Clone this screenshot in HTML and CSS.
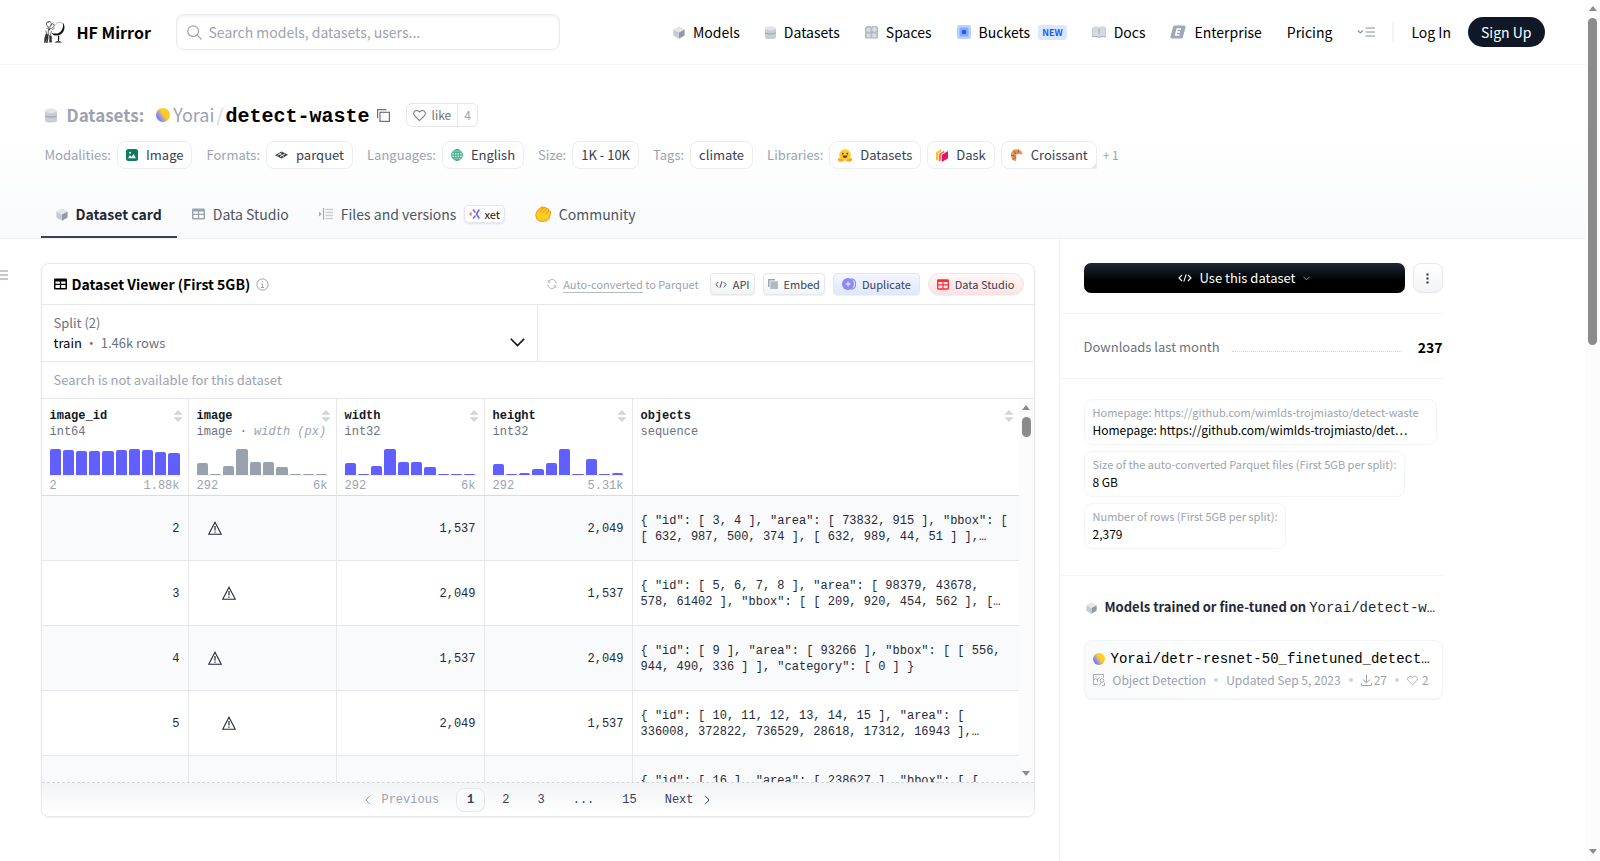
FILE: index.html
```html
<!DOCTYPE html>
<html lang="en">
<head>
  <meta charset="UTF-8">
  <meta name="viewport" content="width=device-width, initial-scale=1.0">
  <title>Yorai/detect-waste · Datasets at HF Mirror</title>
  <link rel="stylesheet" href="styles.css">
</head>
<body>

  <!-- shared icons -->
  <svg class="sprite" aria-hidden="true">
    <symbol id="i-cube" viewBox="0 0 12 13">
      <path d="M6 .3 11.6 3.3 6 6.5.4 3.3z" fill="#e2e5ea"/>
      <path d="M.4 3.6 5.8 6.6v6.1L.4 9.6z" fill="#c5cad3"/>
      <path d="M11.6 3.6 6 6.6v6.1l5.600-3.100z" fill="#9199a8"/>
    </symbol>
    <symbol id="i-db" viewBox="0 0 12 14">
      <path d="M0 2.500v9.300C0 13.400 1.500 14 6 14s6-.6 6-2.200V2.500z" fill="#c8ccd4"/>
      <ellipse cx="6" cy="2.400" rx="6" ry="2.300" fill="#e1e4e9"/>
      <path d="M.2 7.200c1.300 1.100 3.200 1.300 5.800 1.300s4.500-.2 5.800-1.300" fill="none" stroke="#8f97a6" stroke-width=".9"/>
    </symbol>
    <symbol id="i-grid" viewBox="0 0 14 12">
      <path fill-rule="evenodd" d="M1.500 0h11A1.500 1.500 0 0 1 14 1.500v9a1.500 1.500 0 0 1-1.500 1.500h-11A1.500 1.500 0 0 1 0 10.500v-9A1.500 1.500 0 0 1 1.500 0zM1.600 3.200v2.500h4.700V3.200zm6.100 0v2.500h4.700V3.200zM1.600 7.100v3.200h4.700V7.100zm6.100 0v3.200h4.700V7.100z" fill="currentColor"/>
    </symbol>
    <symbol id="i-heart" viewBox="0 0 14 13">
      <path d="M7 12 1.700 6.700a3.200 3.200 0 0 1 0-4.600 3.200 3.200 0 0 1 4.600 0L7 2.800l.7-.7a3.200 3.200 0 0 1 4.600 0 3.200 3.200 0 0 1 0 4.600z" fill="none" stroke="currentColor" stroke-width="1.100"/>
    </symbol>
    <symbol id="i-code" viewBox="0 0 14 8">
      <path d="M4 1 1 4l3 3M10 1l3 3-3 3M8.200.3 5.800 7.700" fill="none" stroke="currentColor" stroke-width="1.100"/>
    </symbol>
    <symbol id="i-sort" viewBox="0 0 10 12">
      <path d="M5 0 9.600 4.800H.4zM5 12 .4 7.200h9.200z" fill="#d1d5db"/>
    </symbol>
    <symbol id="i-warn" viewBox="0 0 14 14">
      <path d="M7 1.200 13.300 13.300H.7z" fill="none" stroke="#1f2937" stroke-width="1.100"/>
      <path d="M7 5v4.600M7 10.500v1.300" stroke="#1f2937" stroke-width="1.200"/>
    </symbol>
    <symbol id="i-up" viewBox="0 0 8 5"><path d="M4 0 8 5H0z" fill="#8b8b8b"/></symbol>
    <symbol id="i-down" viewBox="0 0 8 5"><path d="M4 5 8 0H0z" fill="#8b8b8b"/></symbol>
  </svg>

  <div class="page">
    <header class="site-header">
      <div class="container site-bar">
        <a class="brand" href="#">
          <svg width="22" height="24" viewBox="0 0 22 24">
            <path d="M10.500 5.500C12 2.500 15.500 1.500 18 3" fill="none" stroke="#999" stroke-width=".7"/>
            <path d="M18.500 2.500c2.300 2 2.600 6 .9 9-1.700 2.900-5 4.500-8.100 4-1.800-.3-3.200-1.300-3.600-2.800 3 1.600 6.500 1 9-1.300 2.300-2.300 3-6 1.800-8.900z" fill="#111"/>
            <path d="M14.700 15.500l-.2 5.500" stroke="#111" stroke-width="1.200"/>
            <path d="M10.500 22.500c1.500-1.700 6-1.700 7.500 0z" fill="#111"/>
            <path d="M2.500 3C3.500 1 6 .8 7 2.500s.3 4-1.500 4.500S2 5.500 2.500 3zM6 5.500l3-2 1.500 2.500-2.500 2M2.500 8.500c2-1 4.500-.5 6 1l2-1.500M1.800 10.500l.9 3.500-1.700 4-.5 4.500M4.500 9l-.3 5 1.800 4-.8 4.500M7.500 11l-1 3.500 1.500 4" fill="none" stroke="#444" stroke-width=".8"/>
            <path d="M.8 17l1-3.500 2.400 1 .3 3.500-1 5H2l.5-4-1.200 4H.3zM5.500 15l2 1.500.5 6H6l-.3-3.500zM3 2.500l2-1L4.500 3zM4 8.500l2.500.3-1 2z" fill="#333"/>
          </svg>
          <span>HF Mirror</span>
        </a>
        <label class="search">
          <svg width="15" height="15" viewBox="0 0 15 15" fill="none" stroke="#9ca3af" stroke-width="1.200"><circle cx="6.200" cy="6.200" r="5.400"/><path d="M10.200 10.200 14.500 14.500"/></svg>
          <input type="text" placeholder="Search models, datasets, users..." aria-label="Search models, datasets, users">
        </label>
        <nav class="site-nav">
          <a href="#"><svg width="12" height="13"><use href="#i-cube"/></svg>Models</a>
          <a href="#"><svg width="11" height="13"><use href="#i-db"/></svg>Datasets</a>
          <a href="#"><svg width="13" height="13" viewBox="0 0 13 13"><path d="M0 1h1l1-1h3.500l1 1 1-1H12l1 1.500v11H0z" fill="#b4bac6"/><g fill="#d9dce2"><rect x="1.500" y="2" width="4" height="3.800" rx=".5"/><rect x="1.500" y="7.400" width="4" height="3.800" rx=".5"/><rect x="7.300" y="7.400" width="4" height="3.800" rx=".5"/><circle cx="9.500" cy="3.400" r="2.300"/></g></svg>Spaces</a>
          <a href="#"><svg width="14" height="14" viewBox="0 0 14 14"><rect width="14" height="14" rx="2.500" fill="#bcd0ff"/><rect x="2.500" y="2.500" width="9" height="9" rx="1.500" fill="#85a9ff"/><rect x="5" y="5" width="4" height="4" rx=".5" fill="#1d5cff"/></svg>Buckets <span class="new">NEW</span></a>
          <a href="#"><svg width="14" height="12" viewBox="0 0 14 12"><path d="M.5 1C3 0 5.500 0 7 1c1.500-1 4-1 6.500 0v10c-2.500-.6-5-.5-6.500.5-1.500-1-4-1.100-6.500-.5z" fill="#d5d9df"/><path d="M0 11.300V2M14 11.300V2M7 2.500v5.500M.3 11c2.500-.7 5.200-.6 6.700.4 1.500-1 4.200-1.100 6.700-.4" fill="none" stroke="#a3aab8"/></svg>Docs</a>
          <a href="#"><svg width="16" height="14" viewBox="0 0 16 14"><path d="M4.800.5H14a1.500 1.500 0 0 1 1.500 2l-2.600 9.500a2 2 0 0 1-2 1.500H2a1.500 1.500 0 0 1-1.500-2L3 2A2 2 0 0 1 4.800.5z" fill="#a0a8b7"/><path d="M11 3.900H7.200L5.700 10h3.900M6.500 7h3.500" fill="none" stroke="#fff" stroke-width="1.500"/></svg>Enterprise</a>
          <a href="#">Pricing</a>
          <button class="plain" aria-label="More"><svg width="18" height="10" viewBox="0 0 18 10" fill="none" stroke="#8890a0"><path d="M.8 3.500 3.300 6l2.500-2.500" stroke-width="1.200"/><path d="M8.500 1H18M8.500 5H18M8.500 9H18"/></svg></button>
          <span class="nav-rule"></span>
          <a href="#">Log In</a>
          <a class="sign-up" href="#">Sign Up</a>
        </nav>
      </div>
    </header>

    <div class="hero">
      <div class="container">
        <h1 class="title">
          <a class="kind" href="#"><svg width="12" height="15"><use href="#i-db"/></svg>Datasets:</a>
          <span class="avatar"></span>
          <span class="path"><a class="owner" href="#">Yorai</a><span class="slash">/</span><a class="name" href="#">detect-waste</a></span>
          <button class="plain copy" aria-label="Copy name"><svg width="13" height="13" viewBox="0 0 13 13" fill="none" stroke="#6b7280" stroke-width="1.200"><path d="M.6 9V.6H9.500"/><rect x="3" y="3.300" width="9.400" height="9.100"/></svg></button>
          <span class="like">
            <button><svg width="13" height="13"><use href="#i-heart"/></svg>like</button>
            <button class="like-count">4</button>
          </span>
        </h1>

        <div class="tags">
          <div class="tag-group"><span>Modalities:</span>
            <a class="tag" href="#"><svg width="12" height="12" viewBox="0 0 12 12"><rect width="12" height="12" rx="2.500" fill="#0b7d5c"/><path d="M2 9.200 4 6l1.500 2L7.500 5 10 9.200z" fill="#fff"/><circle cx="4" cy="3.700" r="1" fill="#fff"/></svg>Image</a></div>
          <div class="tag-group"><span>Formats:</span>
            <a class="tag" href="#"><svg width="13" height="12" viewBox="0 0 13 12"><path d="M0 6.300 6.500 2.500 13 5.700 6.500 9.500z" fill="#374151"/><path d="M2.500 6.300 6.500 4M5 7.700l5-2.900M4 4.800l5 2.700" stroke="#fff" stroke-width=".8"/></svg>parquet</a></div>
          <div class="tag-group"><span>Languages:</span>
            <a class="tag" href="#"><svg width="12" height="12" viewBox="0 0 12 12" fill="none" stroke="#3aab84" stroke-width="1"><circle cx="6" cy="6" r="5.400" fill="#d3f0e5"/><ellipse cx="6" cy="6" rx="2.600" ry="5.400"/><path d="M6 .6v10.800M.6 6h10.800M1.300 3.300h9.400M1.300 8.700h9.400"/></svg>English</a></div>
          <div class="tag-group"><span>Size:</span><a class="tag" href="#">1K - 10K</a></div>
          <div class="tag-group"><span>Tags:</span><a class="tag" href="#">climate</a></div>
          <div class="tag-group"><span>Libraries:</span>
            <a class="tag" href="#"><svg width="14" height="13" viewBox="0 0 14 13"><circle cx="7" cy="6" r="5.800" fill="#ffcc2b"/><path d="M0 10.500c0-1.300 1-1.800 2-1.300L5.500 11v1.500H1.500C.5 12.500 0 11.500 0 10.500zM14 10.500c0-1.300-1-1.800-2-1.300L8.500 11v1.500h4c1 0 1.500-1 1.500-2z" fill="#ffa512"/><path d="M4.500 6.500h5C9.300 8.300 8.300 9 7 9s-2.300-.7-2.500-2.500z" fill="#6b3a10"/><circle cx="4.700" cy="4.600" r=".9" fill="#40372c"/><circle cx="9.300" cy="4.600" r=".9" fill="#40372c"/></svg>Datasets</a>
            <a class="tag" href="#"><svg width="12" height="13" viewBox="0 0 12 13"><path d="M0 3.500 5 .3v2.500L2.200 4.500v6L0 11.700z" fill="#ffc11e"/><path d="M2.800 5 8.200 1.600v2L5.300 5.300v6l-2.500 1.200z" fill="#fc6e6b"/><path d="M6 5.700 12 2v7.300L6 13z" fill="#ef1161"/></svg>Dask</a>
            <a class="tag croissant" href="#"><svg width="13" height="13" viewBox="0 0 13 13"><path d="M1 5C1.500 2 4 0 7 .3c2.500.3 5 1.700 5.700 4.400-1.500.8-3.200.8-4.400 0C7 4.800 6 6 6.300 7.500c.2 1 .3 1.800-.8 4.800C2.500 11.500.5 8.500 1 5z" fill="#e0975f"/><path d="M4 1.500 5.500 5M8.500.8 8 4.500M1 6.500l4.500.5M2.500 10.500l3.300-2" stroke="#b4552a" fill="none"/></svg>Croissant</a>
            <span class="more">+ 1</span></div>
        </div>

        <nav class="tabs">
          <a class="active" href="#"><svg width="12" height="13"><use href="#i-cube"/></svg>Dataset card</a>
          <a href="#"><svg class="tab-grid" width="13" height="12"><use href="#i-grid"/></svg>Data Studio</a>
          <a href="#"><svg width="14" height="12" viewBox="0 0 14 12"><path d="M0 3.500 2.700 6 0 8.500z" fill="#a3aab6"/><path d="M4.500 0v12" stroke="#a3aab6" stroke-width="1.200"/><path d="M6.500 1.500H14M6.500 4.500H14M6.500 7.500H14M6.500 10.500H14" stroke="#c9cdd5" stroke-width="1.300"/></svg>Files and versions
            <span class="xet"><svg width="11" height="10" viewBox="0 0 11 10"><path d="M4 .5 6.500 3.500M4 9.500l2.500-3M10.300.5 7.500 5l2.800 4.500" fill="none" stroke="#6d69f5" stroke-width="1.600"/><path d="M2.500 2.500 0 5l2.500 2.500z" fill="#ff6b3d"/></svg>xet</span></a>
          <a href="#"><svg width="16" height="16" viewBox="0 0 16 16"><path d="M1 10C.5 7.500 3 4 5.500 2 6.800.8 8.300 1 8.300 2.300 9.600.8 11.300 1.300 11.200 2.900c1.500-.8 2.800.2 2.400 1.900 1.500-.1 2.200 1 1.700 2.500-.6 2-.5 4-2 5.800-2.500 2.600-7.500 2.900-10 1C1.800 12.900 1.200 11.500 1 10z" fill="#ffd021" stroke="#ff9d1e" stroke-width="1.200"/><path d="M8.300 2.300C6.500 3.700 5.500 5 5 6.800M11.200 2.900 8 6.500M13.600 4.800 10.500 8" fill="none" stroke="#ff9d1e" stroke-width="1.100"/></svg>Community</a>
        </nav>
      </div>
    </div>

    <button class="plain toc-toggle" aria-label="Table of contents"><svg width="8" height="10" viewBox="0 0 8 10" stroke="#8b93a1" stroke-width="1.200"><path d="M0 1h8M0 5h8M0 9h8"/></svg></button>

    <main class="container columns">
      <section class="content">
        <div class="viewer">
          <div class="viewer-head">
            <svg width="13" height="12"><use href="#i-grid"/></svg>
            <h2>Dataset Viewer (First 5GB)</h2>
            <svg width="13" height="13" viewBox="0 0 13 13" fill="none" stroke="#9ca3af"><circle cx="6.500" cy="6.500" r="5.600"/><path d="M6.500 3v1.300M5.300 6h1.200v3.500M5 9.500h3"/></svg>
            <div class="converted">
              <svg width="10" height="10" viewBox="0 0 10 10" fill="none" stroke="#a8aeb9" stroke-width=".9"><path d="M9.300 4.500A4 4 0 0 0 2 2.200M1.200.8v2.400h2.400M.7 5.500A4 4 0 0 0 8 7.800M8.800 9.200V6.800H6.400"/></svg>
              <span><a href="#">Auto-converted</a> to Parquet</span>
            </div>
            <button class="btn"><svg width="12" height="7"><use href="#i-code"/></svg>API</button>
            <button class="btn"><svg width="10" height="10" viewBox="0 0 10 10"><path d="M0 0h7v1.500H1.500V8H0z" fill="#9ca3af"/><rect x="2.300" y="2.300" width="7.700" height="7.700" fill="#b3b8c1"/></svg>Embed</button>
            <button class="btn duplicate"><svg width="14" height="12" viewBox="0 0 14 12"><path d="M9.500.6A5.600 5.600 0 0 1 9.500 11.400" fill="none" stroke="#8b87ff" stroke-width="1.100"/><circle cx="6" cy="6" r="6" fill="#8b87ff"/><path d="M6 3.500v5M3.500 6h5" stroke="#fff"/></svg>Duplicate</button>
            <button class="btn studio"><svg width="12" height="11"><use href="#i-grid"/></svg>Data Studio</button>
          </div>
          <div class="viewer-split">
            <button class="split">
              <span class="split-text"><span>Split (2)</span><span><b>train</b> <i>·</i> 1.46k rows</span></span>
              <svg width="15" height="9" viewBox="0 0 15 9" fill="none" stroke="#111" stroke-width="1.600"><path d="M.8.8 7.500 7.500 14.200.8"/></svg>
            </button>
          </div>
          <input class="viewer-search" type="text" placeholder="Search is not available for this dataset" aria-label="Search this dataset" disabled>

          <div class="table-area">
            <div class="table-clip">
              <table>
                <colgroup><col class="c-id"><col class="c-num"><col class="c-num"><col class="c-num"><col></colgroup>
                <thead>
                  <tr>
                    <th><div class="col-name">image_id<svg width="10" height="12"><use href="#i-sort"/></svg></div><div class="col-type">int64</div>
                      <div class="bars"><i style="height:26px"></i><i style="height:25px"></i><i style="height:24px"></i><i style="height:24px"></i><i style="height:24px"></i><i style="height:25px"></i><i style="height:26px"></i><i style="height:25px"></i><i style="height:23px"></i><i style="height:22px"></i></div>
                      <div class="range"><span>2</span><span>1.88k</span></div></th>
                    <th><div class="col-name">image<svg width="10" height="12"><use href="#i-sort"/></svg></div><div class="col-type">image · <em>width (px)</em></div>
                      <div class="bars gray"><i style="height:12px"></i><i style="height:1px"></i><i style="height:9px"></i><i style="height:26px"></i><i style="height:13px"></i><i style="height:13px"></i><i style="height:8px"></i><i style="height:1px"></i><i style="height:1px"></i><i style="height:1px"></i></div>
                      <div class="range"><span>292</span><span>6k</span></div></th>
                    <th><div class="col-name">width<svg width="10" height="12"><use href="#i-sort"/></svg></div><div class="col-type">int32</div>
                      <div class="bars"><i style="height:12px"></i><i style="height:1px"></i><i style="height:9px"></i><i style="height:26px"></i><i style="height:13px"></i><i style="height:13px"></i><i style="height:8px"></i><i style="height:1px"></i><i style="height:1px"></i><i style="height:1px"></i></div>
                      <div class="range"><span>292</span><span>6k</span></div></th>
                    <th><div class="col-name">height<svg width="10" height="12"><use href="#i-sort"/></svg></div><div class="col-type">int32</div>
                      <div class="bars"><i style="height:11px"></i><i style="height:1px"></i><i style="height:2px"></i><i style="height:6px"></i><i style="height:12px"></i><i style="height:26px"></i><i style="height:1px"></i><i style="height:16px"></i><i style="height:1px"></i><i style="height:2px"></i></div>
                      <div class="range"><span>292</span><span>5.31k</span></div></th>
                    <th><div class="col-name">objects<svg width="10" height="12"><use href="#i-sort"/></svg></div><div class="col-type">sequence</div></th>
                  </tr>
                </thead>
                <tbody>
                  <tr><td>2</td><td class="thumb"><span class="tall"><svg width="14" height="14"><use href="#i-warn"/></svg></span></td><td>1,537</td><td>2,049</td><td class="json"><div>{ "id": [ 3, 4 ], "area": [ 73832, 915 ], "bbox": [ [ 632, 987, 500, 374 ], [ 632, 989, 44, 51 ] ],…</div></td></tr>
                  <tr><td>3</td><td class="thumb"><span class="wide"><svg width="14" height="14"><use href="#i-warn"/></svg></span></td><td>2,049</td><td>1,537</td><td class="json"><div>{ "id": [ 5, 6, 7, 8 ], "area": [ 98379, 43678, 578, 61402 ], "bbox": [ [ 209, 920, 454, 562 ], […</div></td></tr>
                  <tr><td>4</td><td class="thumb"><span class="tall"><svg width="14" height="14"><use href="#i-warn"/></svg></span></td><td>1,537</td><td>2,049</td><td class="json"><div>{ "id": [ 9 ], "area": [ 93266 ], "bbox": [ [ 556, 944, 490, 336 ] ], "category": [ 0 ] }</div></td></tr>
                  <tr><td>5</td><td class="thumb"><span class="wide"><svg width="14" height="14"><use href="#i-warn"/></svg></span></td><td>2,049</td><td>1,537</td><td class="json"><div>{ "id": [ 10, 11, 12, 13, 14, 15 ], "area": [ 336008, 372822, 736529, 28618, 17312, 16943 ],…</div></td></tr>
                  <tr><td></td><td class="thumb"></td><td></td><td></td><td class="json"><div>{ "id": [ 16 ], "area": [ 238627 ], "bbox": [ [</div></td></tr>
                </tbody>
              </table>
            </div>
            <div class="scrollbar inner"><svg width="10" height="5"><use href="#i-up"/></svg><span class="thumb-bar"></span><svg width="10" height="5"><use href="#i-down"/></svg></div>
          </div>

          <nav class="pager">
            <a class="off" href="#"><svg width="6" height="10" viewBox="0 0 6 10" fill="none" stroke="currentColor"><path d="M5 .8 1 5l4 4.200"/></svg>Previous</a>
            <a class="current" href="#">1</a>
            <a href="#">2</a>
            <a href="#">3</a>
            <a href="#">...</a>
            <a href="#">15</a>
            <a href="#">Next<svg width="6" height="10" viewBox="0 0 6 10" fill="none" stroke="currentColor"><path d="M1 .8 5 5 1 9.200"/></svg></a>
          </nav>
        </div>
      </section>

      <aside class="sidebar">
        <div class="side-block actions">
          <button class="use"><svg width="14" height="8"><use href="#i-code"/></svg>Use this dataset<svg width="7" height="5" viewBox="0 0 7 5" fill="none" stroke="#8c95a5"><path d="M.5.7 3.500 3.900 6.500.7"/></svg></button>
          <button class="dots" aria-label="More actions"><svg width="3" height="11" viewBox="0 0 3 11" fill="#1f2937"><rect width="2" height="2" x=".5" y=".5"/><rect width="2" height="2" x=".5" y="4.500"/><rect width="2" height="2" x=".5" y="8.500"/></svg></button>
        </div>
        <div class="side-block downloads"><span>Downloads last month</span><span class="leader"></span><strong>237</strong></div>
        <div class="side-block facts">
          <a class="fact long" href="#"><small>Homepage: https://github.com/wimlds-trojmiasto/detect-waste</small><span>Homepage: https://github.com/wimlds-trojmiasto/det…</span></a>
          <a class="fact" href="#"><small>Size of the auto-converted Parquet files (First 5GB per split):</small><span>8 GB</span></a>
          <a class="fact" href="#"><small>Number of rows (First 5GB per split):</small><span>2,379</span></a>
        </div>
        <div class="side-block models">
          <h3><svg width="11" height="12"><use href="#i-cube"/></svg><span>Models trained or fine-tuned on <code>Yorai/detect-w…</code></span></h3>
          <a class="model" href="#">
            <div class="model-name"><span class="avatar"></span><code>Yorai/detr-resnet-50_finetuned_detect…</code></div>
            <div class="model-meta">
              <svg width="12" height="12" viewBox="0 0 12 12" fill="none" stroke="currentColor" stroke-width=".9"><path d="M4.500 10.500H.5V.5h10v3M.5 6.500 2.500 4.500l2 1.500M4.500 8.500V5L7 3.500M3 2v1"/><circle cx="9" cy="6.500" r="1.800"/><path d="M8 8.500 6.500 11.500M11.500 8.500v3H9"/></svg>
              <span>Object Detection</span><i></i><span>Updated Sep 5, 2023</span><i></i>
              <span class="count"><svg width="11" height="11" viewBox="0 0 11 11" fill="none" stroke="currentColor"><path d="M5.500 0v7.500M2 4.500l3.500 3.300L9 4.500M.5 8v2.500h10V8"/></svg>27</span><i></i>
              <span class="count likes"><svg width="11" height="11"><use href="#i-heart"/></svg>2</span>
            </div>
          </a>
        </div>
      </aside>
    </main>
  </div>

  <div class="scrollbar outer"><svg width="10" height="5"><use href="#i-up"/></svg><span class="thumb-bar"></span><svg width="10" height="5"><use href="#i-down"/></svg></div>

</body>
</html>
```

FILE: styles.css
```css
* {
  box-sizing: border-box;
}

body {
  display: flex;
  height: 100vh;
  margin: 0;
  overflow: hidden;
  font-family: "Noto Sans CJK SC", "Open Sans", sans-serif;
  font-size: 14px;
  line-height: 24px;
  color: #000;
  background: #fff;
}

a {
  color: inherit;
  text-decoration: none;
}

button,
input {
  font: inherit;
  color: inherit;
}

button {
  padding: 0;
  cursor: pointer;
}

svg {
  flex: none;
}

code {
  font-family: "Liberation Mono", monospace;
  font-size: 14px;
}

.sprite {
  display: none;
}

.plain {
  display: flex;
  border: 0;
  background: none;
}

.page {
  position: relative;
  flex: 1;
  min-width: 0;
  height: 100%;
  display: flex;
  flex-direction: column;
}

.container {
  width: 100%;
  max-width: 1536px;
  margin: 0 auto;
  padding: 0 16px;
}

/* top bar */
.site-header {
  border-bottom: 1px solid #f3f4f6;
}

.site-bar {
  display: flex;
  align-items: center;
  height: 64px;
}

.brand {
  display: flex;
  align-items: center;
  gap: 11px;
  width: 135px;
  padding-left: 3px;
  font-size: 16px;
  font-weight: bold;
  white-space: nowrap;
}

.search {
  display: flex;
  align-items: center;
  gap: 7px;
  flex: 0 1 384px;
  height: 36px;
  padding: 0 10px;
  border: 1px solid #e5e7eb;
  border-radius: 8px;
  box-shadow: inset 0 2px 3px #f3f4f6;
}

.search input {
  flex: 1;
  min-width: 0;
  padding: 0;
  border: 0;
  outline: 0;
  background: none;
}

input::placeholder {
  color: #9ca3af;
  opacity: 1;
}

.site-nav {
  display: flex;
  align-items: center;
  gap: 25px;
  margin-left: auto;
  white-space: nowrap;
}

.site-nav a {
  display: flex;
  align-items: center;
  gap: 8px;
}

.new {
  padding: 0 4px;
  border-radius: 3px;
  font-size: 9px;
  font-weight: bold;
  line-height: 15px;
  color: #1d5cff;
  background: #dbe6ff;
}

.nav-rule {
  width: 2px;
  height: 20px;
  margin: 0 -8px;
  background: #f3f4f6;
}

.site-nav .sign-up {
  height: 30px;
  margin-left: -8px;
  padding: 0 13px;
  border-radius: 15px;
  color: #fff;
  background: #101827;
}

/* dataset header */
.hero {
  padding-top: 34px;
  border-bottom: 1px solid #f0f1f4;
  background: linear-gradient(#fff 35%, #f9fafc);
}

.title {
  display: flex;
  align-items: center;
  height: 32px;
  margin: 0 0 10px;
  padding-left: 4px;
  font-size: 18px;
  font-weight: normal;
}

.kind {
  display: flex;
  align-items: center;
  gap: 10px;
  margin-right: 12px;
  font-size: 17px;
  font-weight: bold;
  color: #9ca3af;
}

.avatar {
  width: 14px;
  height: 14px;
  margin-right: 3px;
  border-radius: 50%;
  background: linear-gradient(55deg, #7b83ff 25%, #d9b07e 45%, #f9cf22 58%);
}

.path {
  display: flex;
  align-items: baseline;
}

.owner {
  color: #9ca3af;
}

.slash {
  margin: 0 2px;
  color: #d1d5db;
}

.name {
  font-family: "Liberation Mono", monospace;
  font-size: 20px;
  font-weight: bold;
}

.copy {
  margin: 0 16px 0 8px;
}

.like {
  display: flex;
  height: 24px;
  border: 1px solid #e5e7eb;
  border-radius: 6px;
}

.like button {
  display: flex;
  align-items: center;
  gap: 5px;
  padding: 0 6px;
  border: 0;
  font-size: 12px;
  line-height: 22px;
  color: #6b7280;
  background: none;
}

.like .like-count {
  border-left: 1px solid #e5e7eb;
  color: #9ca3af;
}

.tags {
  display: flex;
  gap: 14px;
  padding-left: 4px;
  font-size: 13px;
  white-space: nowrap;
}

.tag-group {
  display: flex;
  align-items: center;
  gap: 6px;
  color: #9ca3af;
}

.tag {
  display: flex;
  align-items: center;
  gap: 8px;
  height: 28px;
  padding: 0 8px;
  border: 1px solid #ededf0;
  border-radius: 8px;
  color: #374151;
  background: #fff;
}

.croissant {
  border-bottom-right-radius: 0;
  background: linear-gradient(135deg, #fff 96%, #e5e7eb 96%);
}

.more {
  font-size: 12px;
}

.tabs {
  display: flex;
  margin-top: 21px;
}

.tabs a {
  display: flex;
  align-items: center;
  gap: 8px;
  height: 48px;
  padding: 2px 15px 0;
  border-bottom: 2px solid transparent;
  color: #4b5563;
  white-space: nowrap;
}

.tabs .active {
  border-bottom-color: #374151;
  font-weight: bold;
  color: #1f2937;
}

.tab-grid {
  color: #9ca3af;
}

.xet {
  display: flex;
  align-items: center;
  gap: 4px;
  padding: 0 4px;
  border: 1px solid #e5e7eb;
  border-radius: 5px;
  font-size: 11px;
  line-height: 16px;
  color: #111;
  background: #fff;
  box-shadow: 0 1px 2px #e4defc;
}

.toc-toggle {
  position: absolute;
  left: 0;
  top: 270px;
}

/* two columns */
.columns {
  flex: 1;
  display: flex;
  min-height: 0;
  padding-right: 118px;
}

.content {
  flex: 1;
  min-width: 0;
  padding: 24px 24px 0 0;
}

.viewer {
  overflow: hidden;
  border: 1px solid #e5e7eb;
  border-radius: 8px;
  box-shadow: 0 1px 2px #eef0f2;
}

.viewer-head {
  display: flex;
  align-items: center;
  gap: 8px;
  height: 41px;
  padding: 0 10px 0 12px;
  border-bottom: 1px solid #e5e7eb;
  white-space: nowrap;
}

.viewer-head h2 {
  margin: 0 -2px 0 -3px;
  font-size: 14px;
  font-weight: bold;
}

.converted {
  display: flex;
  align-items: center;
  gap: 6px;
  margin: 0 3px 0 auto;
  font-size: 11px;
  color: #9ca3af;
}

.converted a {
  border-bottom: 1px solid #b6bbc4;
}

.btn {
  display: flex;
  align-items: center;
  gap: 6px;
  height: 22px;
  padding: 0 4px;
  border: 1px solid #e5e7eb;
  border-radius: 4px;
  font-size: 11px;
  color: #374151;
  background: linear-gradient(#fff, #f3f4f6);
  box-shadow: 0 1px 1px #f0f1f3;
}

.duplicate {
  padding: 0 8px;
  border-color: #dfe5fb;
  background: linear-gradient(#f4f6ff, #e0e7ff);
}

.studio {
  padding: 0 8px;
  border-color: #f6e3e3;
  border-radius: 11px;
  background: linear-gradient(#fff8f8, #fee2e2);
}

.studio svg {
  color: #fb2c36;
}

.viewer-split {
  height: 57px;
  border-bottom: 1px solid #e5e7eb;
}

.split {
  display: flex;
  align-items: flex-end;
  justify-content: space-between;
  width: 50%;
  height: 56px;
  padding: 8px 12px;
  border: 0;
  border-right: 1px solid #e5e7eb;
  font-size: 13px;
  line-height: 20px;
  text-align: left;
  color: #6b7280;
  background: none;
}

.split svg {
  margin-bottom: 6px;
}

.split-text {
  display: flex;
  flex-direction: column;
}

.split b {
  font-weight: normal;
  color: #000;
}

.split i {
  font-style: normal;
}

.viewer-search {
  display: block;
  width: 100%;
  height: 37px;
  padding: 0 12px 2px;
  border: 0;
  border-bottom: 1px solid #e5e7eb;
  font-size: 13px;
  background: none;
}

.table-area {
  display: flex;
  height: 383px;
  font-family: "Liberation Mono", monospace;
  font-size: 12px;
  line-height: 16px;
}

.table-clip {
  flex: 1;
  min-width: 0;
  overflow: hidden;
}

table {
  width: 100%;
  border-collapse: separate;
  border-spacing: 0;
  table-layout: fixed;
}

.c-id {
  width: 147px;
}

.c-num {
  width: 148px;
}

th {
  height: 97px;
  padding: 9px 8px 0;
  border-right: 1px solid #e5e7eb;
  border-bottom: 1px solid #d8dbe0;
  font-weight: normal;
  text-align: left;
  vertical-align: top;
  white-space: nowrap;
}

th:last-child,
td:last-child {
  border-right: 0;
}

.col-name {
  display: flex;
  align-items: center;
  justify-content: space-between;
  margin-right: -3px;
  font-weight: bold;
  color: #111827;
}

.col-type {
  color: #6b7280;
}

.col-type em,
.range {
  color: #9ca3af;
}

.bars {
  display: flex;
  align-items: flex-end;
  gap: 2px;
  height: 36px;
  border-bottom: 1px solid #f0f1f3;
}

.bars i {
  flex: 1;
  border-radius: 2px 2px 0 0;
  background: #615fff;
}

.gray i {
  background: #99a1af;
}

.range {
  display: flex;
  justify-content: space-between;
  padding-top: 2px;
}

td {
  height: 65px;
  padding: 2px 8px 0;
  border-right: 1px solid #e5e7eb;
  border-bottom: 1px solid #e5e7eb;
  text-align: right;
  color: #1f2937;
}

tbody tr:nth-child(odd) td {
  background: #f9fafb;
}

.thumb {
  padding: 0;
}

.thumb span {
  display: flex;
  justify-content: center;
}

.tall {
  width: 52px;
}

.wide {
  width: 80px;
}

.json {
  text-align: left;
}

.json div {
  height: 32px;
}

/* drawn scroll tracks */
.scrollbar {
  display: flex;
  flex-direction: column;
  align-items: center;
  flex: none;
  width: 15px;
  background: #fcfcfc;
}

.scrollbar svg:last-child {
  margin-top: auto;
}

.thumb-bar {
  width: 9px;
  margin-top: 7px;
  border-radius: 5px;
  background: #8b8b8b;
}

.inner {
  padding: 6px 0;
}

.inner .thumb-bar {
  height: 20px;
}

.outer {
  height: 100%;
  padding: 6px 0 7px;
}

.outer .thumb-bar {
  height: 327px;
}

.pager {
  display: flex;
  align-items: center;
  justify-content: center;
  height: 34px;
  border-top: 1px dashed #d1d5db;
  font-family: "Liberation Mono", monospace;
  font-size: 12px;
  line-height: 22px;
  color: #374151;
  background: linear-gradient(#f3f4f6, #fff);
}

.pager a {
  display: flex;
  align-items: center;
  gap: 10px;
  margin: 0 3px;
  padding: 0 10px;
  border: 1px solid transparent;
  border-radius: 8px;
}

.pager .off {
  color: #9ca3af;
}

.pager .current {
  border-color: #e5e7eb;
  font-weight: bold;
  background: #f9fafb;
}

/* right column */
.sidebar {
  flex: none;
  width: 384px;
  border-left: 1px solid #f3f4f6;
}

.side-block {
  padding: 20px 0 0 24px;
  border-bottom: 1px solid #f3f4f6;
}

.side-block:last-child {
  border-bottom: 0;
}

.actions {
  display: flex;
  gap: 8px;
  padding: 24px 0 20px 24px;
}

.use {
  display: flex;
  align-items: center;
  justify-content: center;
  gap: 7px;
  flex: 1;
  height: 30px;
  border: 0;
  border-radius: 7px;
  font-size: 13px;
  color: #fff;
  background: linear-gradient(#1f2937, #000 60%);
}

.dots {
  display: flex;
  align-items: center;
  justify-content: center;
  width: 30px;
  height: 30px;
  border: 1px solid #e5e7eb;
  border-radius: 8px;
  background: linear-gradient(#fff, #f3f4f6);
}

.downloads {
  display: flex;
  align-items: center;
  height: 65px;
  padding-top: 1px;
  font-size: 13px;
  color: #6b7280;
}

.downloads strong {
  font-size: 14px;
  color: #000;
}

.leader {
  flex: 1;
  height: 10px;
  margin: 0 16px 0 12px;
  border-bottom: 1px dotted #d1d5db;
}

.facts {
  display: flex;
  flex-direction: column;
  align-items: flex-start;
  gap: 6px;
  padding-bottom: 26px;
}

.fact {
  display: flex;
  flex-direction: column;
  height: 46px;
  padding: 4px 8px;
  border: 1px solid #f3f4f6;
  border-radius: 8px;
  font-size: 12px;
  line-height: 20px;
  white-space: nowrap;
}

.fact small {
  font-size: 11px;
  line-height: 16px;
  color: #9ca3af;
}

.long {
  width: 353px;
}

.models {
  padding-top: 19px;
}

.models h3 {
  display: flex;
  align-items: center;
  margin: 0 0 20px;
  padding-left: 2px;
  font-size: 13px;
  font-weight: bold;
  white-space: nowrap;
  color: #1f2937;
}

.models h3 svg {
  margin-right: 8px;
}

.models h3 code {
  font-weight: normal;
}

.model {
  display: block;
  padding: 6px 8px 9px;
  border: 1px solid #f3f4f6;
  border-radius: 8px;
  background: linear-gradient(90deg, #f9fafb, #fff 50%);
  box-shadow: 0 1px 2px #f0f1f3;
}

.model-name {
  display: flex;
  align-items: center;
}

.model-name .avatar {
  width: 12px;
  height: 12px;
  margin-right: 6px;
}

.model-meta {
  display: flex;
  align-items: center;
  gap: 8px;
  font-size: 12px;
  line-height: 18px;
  white-space: nowrap;
  color: #9ca3af;
}

.model-meta i {
  width: 4px;
  height: 4px;
  border-radius: 50%;
  background: #d1d5db;
}

.count {
  display: flex;
  align-items: center;
  gap: 2px;
}

.likes {
  gap: 4px;
}
```
